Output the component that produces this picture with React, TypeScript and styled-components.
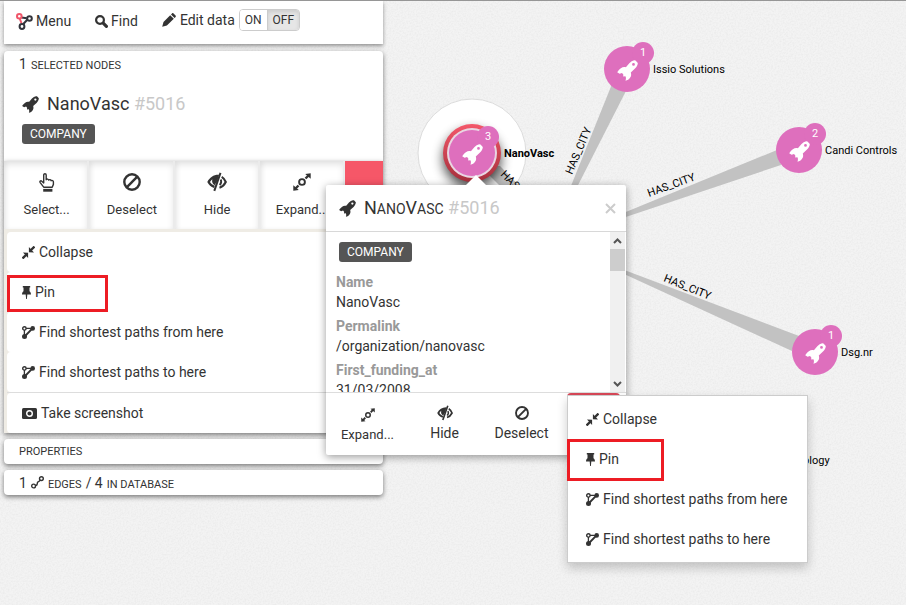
import React, { useState } from "react";
import styled, { createGlobalStyle, css } from "styled-components";

const GlobalStyle = createGlobalStyle`
  * { box-sizing: border-box; }
  body {
    margin: 0;
    background: #f0f0f0;
    color: #333;
    font: 14px/20px Roboto, sans-serif;
  }
  button {
    font: inherit;
    color: inherit;
    border: 0;
    padding: 0;
    margin: 0;
    background: none;
    cursor: pointer;
    text-align: left;
  }
  ul, dl, dd { margin: 0; padding: 0; list-style: none; }
  h2 { margin: 0; font-weight: 400; }
  svg { display: block; flex: none; }
`;

/* ---------- icons ---------- */

type IconProps = { size?: number };

const rocketPath =
  "M17.200.2C15.500.600 13.800 1.600 12.300 3.200L8.900 7.200C7.200 6.700 5.400 7 3.900 8.200C2.600 9.300 1.100 10.600.2 12.300L2.600 13.800L5 13L6.300 14.500L6.200 16.600L8.400 16.300C9.200 17.800 9 19.200 8.500 20.800C10.400 20.500 12.100 19.300 13.200 17.600C14.300 16 14.400 14.300 13.800 12.400L18 8.600C19.800 6.700 20.900 4.600 20.800 2.900L18.500.4zM16.500 3a1.400 1.400 0 1 1 0 2.800 1.400 1.400 0 0 1 0-2.800z";

const RocketIcon = ({ size = 17 }: IconProps) => (
  <svg width={size} height={size} viewBox="0 0 21 21" aria-hidden="true">
    <path d={rocketPath} fill="currentColor" fillRule="evenodd" />
  </svg>
);

const LogoIcon = () => (
  <svg width="17" height="17" viewBox="0 0 17 17" fill="none" strokeWidth="2" aria-hidden="true">
    <path d="M3.700 5.500L5.600 10.500" stroke="#f0566a" />
    <path d="M11.500 6.500L7.300 11M5.500 4.600l5.300.6" stroke="#33343c" />
    <circle cx="3.300" cy="3.300" r="2.300" stroke="#f0566a" />
    <circle cx="13.500" cy="5.500" r="2.300" stroke="#33343c" />
    <circle cx="6" cy="13.500" r="2.400" stroke="#33343c" />
  </svg>
);

const SearchIcon = () => (
  <svg width="13" height="13" viewBox="0 0 13 13" fill="none" stroke="currentColor" aria-hidden="true">
    <circle cx="5" cy="5" r="3.900" strokeWidth="2.200" />
    <path d="M8.200 8.200l3.200 3.200" strokeWidth="3.200" strokeLinecap="round" />
  </svg>
);

const PencilIcon = () => (
  <svg width="14" height="14" viewBox="0 0 14 14" fill="currentColor" aria-hidden="true">
    <path d="M.2 13.800l1.300-4.800L8.200 2.200l3.600 3.600-6.900 6.700zM9 1.400l1-1c.5-.4 1-.4 1.500 0l2.100 2.100c.4.500.4 1 0 1.500l-1 1z" />
  </svg>
);

const HandIcon = () => (
  <svg width="16" height="19" viewBox="0 0 16 19" fill="none" stroke="currentColor" strokeWidth="1.400" strokeLinejoin="round" aria-hidden="true">
    <path d="M4.700 14.200L1.200 9.600C.4 8.400 1.700 7.300 2.800 8.200l1.900 1.700V2c0-1.700 2.500-1.700 2.500 0v4.700c.5-1 2.200-.8 2.500.4.600-.8 2.200-.5 2.400.6.8-.6 2.300-.2 2.300 1.100v2.600l-1.200 2.800z" />
    <path d="M4.200 17.300h9.200" strokeWidth="2.800" strokeLinejoin="miter" />
  </svg>
);

const BanIcon = ({ size = 18 }: IconProps) => (
  <svg width={size} height={size} viewBox="0 0 18 18" fill="none" stroke="currentColor" strokeWidth="2.400" aria-hidden="true">
    <circle cx="9" cy="9" r="7.700" />
    <path d="M3.700 14.300L14.300 3.700" />
  </svg>
);

const HideIcon = ({ size = 20 }: IconProps) => (
  <svg width={size} height={size} viewBox="0 0 20 20" fill="none" stroke="currentColor" aria-hidden="true">
    <path d="M13.500.8L7.300 18.800" strokeWidth="2" />
    <path d="M12.200 2.800C6.800 2.500 2.800 5.200.3 10c1.500 3 3.700 5 6.700 6l.8-2.300C5.600 13 4.100 11.700 3 10c.7-1.200 1.400-2.100 2.300-2.800-.6 2.600.1 5 2.700 6z" fill="currentColor" stroke="none" />
    <path d="M7.600 6.300l3.600-.6-1.700 5c-1.700-.2-2.600-2.200-1.900-4.400z" fill="currentColor" stroke="none" />
    <path d="M14.700 4.800c1.800 1 3.100 2.900 4.100 5.200-1.500 3-3.500 4.800-6.300 5.700" strokeWidth="2.100" />
    <path d="M13.700 7.500c1 2 .6 4-1 5.700" strokeWidth="1.800" />
  </svg>
);

const ExpandIcon = ({ size = 18 }: IconProps) => (
  <svg width={size} height={size} viewBox="0 0 18 18" fill="none" stroke="currentColor" strokeWidth="1.900" aria-hidden="true">
    <circle cx="9" cy="9" r="2.900" />
    <path d="M12.500 5.500l3-3M5.500 12.500l-3 3" strokeWidth="2.400" />
    <path d="M17.700.3v5.500L12.200.900zM.3 17.700v-5.500l5.500 4.900z" fill="currentColor" stroke="none" />
  </svg>
);

const CollapseIcon = () => (
  <svg width="13" height="13" viewBox="0 0 13 13" fill="none" stroke="currentColor" strokeWidth="2.400" aria-hidden="true">
    <path d="M12.500.6L8.500 4.500M.5 12.500l4-4" />
    <path d="M6.900 1v5.200l5.100.2zM6.100 12v-5.200L1 6.600z" fill="currentColor" stroke="none" />
  </svg>
);

const PinIcon = () => (
  <svg width="9" height="13" viewBox="0 0 9 13" fill="currentColor" aria-hidden="true">
    <path d="M.8 0h7.400v1.600H7.500v3.700C8.400 6 9 6.900 9 8.500H5.300L4.900 13h-.8l-.4-4.500H0C0 6.900.6 6 1.500 5.300V1.600H.8z" />
  </svg>
);

const PathIcon = () => (
  <svg width="13" height="13" viewBox="0 0 13 13" fill="none" stroke="currentColor" aria-hidden="true">
    <circle cx="2.400" cy="2.400" r="1.700" strokeWidth="1.400" />
    <path d="M2.400 4v6M4 2.400h6" strokeWidth="1.300" />
    <path d="M2.600 10.500L10.500 2.400" strokeWidth="1.900" />
    <circle cx="10.700" cy="2.400" r="2.300" fill="currentColor" stroke="none" />
    <circle cx="2.500" cy="10.500" r="2.500" fill="currentColor" stroke="none" />
  </svg>
);

const CameraIcon = () => (
  <svg width="15" height="11" viewBox="0 0 15 11" aria-hidden="true">
    <rect width="15" height="11" rx="1.500" fill="currentColor" />
    <circle cx="7.500" cy="5.500" r="2.800" fill="none" stroke="#fff" strokeWidth="1.400" />
  </svg>
);

const EdgeIcon = () => (
  <svg width="13" height="13" viewBox="0 0 13 13" fill="none" stroke="currentColor" strokeWidth="1.400" aria-hidden="true">
    <circle cx="2.600" cy="10" r="1.900" />
    <circle cx="10.400" cy="2.600" r="1.900" />
    <path d="M4.300 9.600c2.700-.3 1.600-1.500 2.200-3C6.900 5.300 8 6 9.200 4.200" />
  </svg>
);

/* ---------- page ---------- */

const Page = styled.main`
  position: relative;
  min-height: 100vh;
  overflow: hidden;
  border-top: 1px solid #969696;
`;

const Canvas = styled.svg`
  position: absolute;
  inset: 0;
  width: 100%;
  height: 100%;
  font: 11px Roboto, sans-serif;
`;

const Sidebar = styled.aside`
  position: relative;
  width: 42%;
  max-width: 379px;
  min-width: 320px;
  margin-left: 4px;
`;

const Card = styled.section`
  margin-bottom: 6px;
  background: #fff;
  border-radius: 4px;
  box-shadow: 0 2px 5px rgba(0, 0, 0, 0.5);
`;

const TopBar = styled.header`
  display: flex;
  align-items: flex-start;
  height: 43px;
  padding: 8px 12px;
  margin-bottom: 7px;
  background: #fff;
  box-shadow: 0 2px 4px rgba(0, 0, 0, 0.4);
`;

const BarButton = styled.button`
  display: flex;
  align-items: center;
  gap: 3px;
  height: 24px;
  margin-right: 24px;
`;

const EditData = styled.div`
  display: flex;
  align-items: center;
  gap: 4px;
  height: 22px;
  line-height: 24px;
`;

const Toggle = styled.div`
  display: flex;
  overflow: hidden;
  border: 1px solid #ccc;
  border-radius: 4px;
`;

const ToggleButton = styled.button<{ $on: boolean }>`
  height: 20px;
  padding: 0 5px;
  font-size: 12px;
  line-height: 20px;
  background: ${(p) => (p.$on ? "#e6e6e6" : "#fff")};
  ${(p) => p.$on && css`box-shadow: inset 0 2px 4px rgba(0, 0, 0, 0.12);`}
  & + & { border-left: 1px solid #ccc; }
`;

const SectionTitle = styled.h2`
  display: flex;
  align-items: baseline;
  gap: 4px;
  padding: 0 15px;
  height: 25px;
  font-size: 14px;
  line-height: 26px;
  svg { align-self: center; }
`;

const Small = styled.span`
  font-size: 11px;
  text-transform: uppercase;
`;

const NodeTitle = styled.h2`
  display: flex;
  align-items: center;
  gap: 8px;
  font-size: 18px;
  line-height: 24px;
`;

const NodeName = styled.span`
  white-space: pre;
`;

const Caps = styled.span`
  font-size: 14px;
  text-transform: uppercase;
`;

const NodeId = styled.span`
  color: #c8c8c8;
`;

const Tag = styled.span`
  display: inline-block;
  height: 20px;
  padding: 0 8px;
  border-radius: 3px;
  background: #555;
  color: #fff;
  font-size: 12px;
  line-height: 20px;
`;

const SelectedCard = styled(Card)`
  height: 110px;
  margin: 0;
  border-radius: 4px 4px 0 0;
`;

const SelectedBody = styled.div`
  display: flex;
  flex-direction: column;
  align-items: flex-start;
  gap: 8px;
  padding: 16px 18px;
`;

const ActionsCard = styled(Card)`
  overflow: hidden;
  border-radius: 0;
  background: #efece5;
`;

const Actions = styled.div`
  display: grid;
  grid-template-columns: repeat(4, 1fr) 38px;
  height: 68px;
`;

const Action = styled.button`
  display: grid;
  grid-template-rows: 42px 14px;
  justify-items: center;
  align-items: center;
  align-content: start;
  padding-left: 2px;
  font-size: 13px;
  background: #fff;
  border-right: 2px solid #ebebeb;
  box-shadow: inset 0 4px 6px rgba(0, 0, 0, 0.1), inset 3px 0 4px rgba(0, 0, 0, 0.04);
`;

const More = styled.button`
  background: #f65768;
`;

const MenuList = styled.ul`
  padding: 3px 0 0 3px;
`;

const MenuItem = styled.li<{ $ruled?: boolean }>`
  position: relative;
  ${(p) => p.$ruled && css`border-top: 1px solid #ddd;`}
`;

const MenuButton = styled.button`
  display: flex;
  align-items: center;
  gap: 4px;
  width: 100%;
  height: 40px;
  padding: 0 15px;
  background: #fff;
  border-radius: 4px;
  white-space: nowrap;
`;

const Highlight = styled.span<{ $wide?: boolean }>`
  position: absolute;
  z-index: 1;
  top: ${(p) => (p.$wide ? 0 : 3)}px;
  bottom: ${(p) => (p.$wide ? -2 : 0)}px;
  left: 0;
  width: ${(p) => (p.$wide ? 97 : 101)}px;
  border: 3px solid #ed1c24;
  pointer-events: none;
`;

/* ---------- popup ---------- */

const Popup = styled.section`
  position: absolute;
  top: 184px;
  left: 326px;
  width: 300px;
  background: #fff;
  border-radius: 2px;
  box-shadow: 0 2px 8px rgba(0, 0, 0, 0.4);
  &::before {
    content: "";
    position: absolute;
    bottom: 100%;
    left: 140px;
    border: 10px solid transparent;
    border-top-width: 0;
    border-bottom-color: #fff;
  }
`;

const PopupHeader = styled.header`
  display: flex;
  align-items: center;
  justify-content: space-between;
  height: 47px;
  padding: 1px 10px 0 13px;
  border-bottom: 1px solid #d8d8d8;
`;

const Close = styled.button`
  color: #ccc;
`;

const PopupBody = styled.div`
  display: flex;
  height: 161px;
  border-bottom: 1px solid #ddd;
`;

const Content = styled.div`
  flex: 1;
  overflow: hidden;
  padding: 9px 13px 0;
`;

const Fields = styled.dl`
  margin: 10px -3px 0;
  dt { color: #999; font-weight: 700; line-height: 20px; }
  dd { margin-bottom: 4px; line-height: 20px; }
`;

const ScrollBar = styled.div`
  display: flex;
  flex-direction: column;
  align-items: center;
  width: 15px;
  margin-right: 1px;
  background: #f0f0f0;
`;

const Thumb = styled.div`
  width: 100%;
  height: 22px;
  margin-bottom: auto;
  background: #cdcdcd;
`;

const PopupFooter = styled.footer`
  display: grid;
  grid-template-columns: repeat(3, 77px) 1fr;
  height: 62px;
  padding: 0 6px 0 3px;
`;

const PopupAction = styled.button<{ $compact?: boolean }>`
  display: grid;
  grid-template-rows: 20px 20px;
  justify-items: center;
  align-items: center;
  align-content: start;
  padding-top: ${(p) => (p.$compact ? 12 : 10)}px;
  font-size: ${(p) => (p.$compact ? 13 : 14)}px;
`;

const MoreWrap = styled.div`
  position: relative;
  margin-left: 7px;
  button[aria-expanded] {
    display: block;
    width: 100%;
    height: 40px;
    border-radius: 4px 4px 0 0;
    background: #d94858;
  }
`;

const Dropdown = styled.ul`
  position: absolute;
  top: 2px;
  left: 0;
  width: 241px;
  padding: 3px 0;
  background: #fff;
  border: 1px solid #ccc;
  box-shadow: 0 5px 10px rgba(0, 0, 0, 0.2);
  ${MenuButton} { padding: 0 18px; }
  ${Highlight} { left: -1px; }
`;

/* ---------- graph ---------- */

type GraphNode = { x: number; y: number; links: number; label: string };

const nodes: GraphNode[] = [
  { x: 627, y: 68, links: 1, label: "Issio Solutions" },
  { x: 799, y: 149, links: 2, label: "Candi Controls" },
  { x: 815, y: 351, links: 1, label: "Dsg.nr" },
];

const Disc = ({ x, y, links }: { x: number; y: number; links: number }) => (
  <g transform={`translate(${x} ${y})`}>
    <circle r="23" fill="#de6fbd" />
    <circle cx="16" cy="-16" r="11" fill="#de6fbd" />
    <g transform="translate(-10 -9)">
      <path d={rocketPath} fill="#fff" fillRule="evenodd" />
    </g>
    <text x="16" y="-13" fill="#fff" textAnchor="middle">{links}</text>
  </g>
);

const Graph = () => (
  <Canvas role="img" aria-label="Graph of companies linked by city">
    <defs>
      <filter id="grain" x="0" y="0" width="100%" height="100%">
        <feTurbulence type="fractalNoise" baseFrequency="0.6" numOctaves="2" />
        <feColorMatrix values="0 0 0 0 0.4  0 0 0 0 0.4  0 0 0 0 0.4  0.22 0 0 0 -0.08" />
      </filter>
      <filter id="glow" x="-60%" y="-60%" width="220%" height="220%">
        <feGaussianBlur stdDeviation="6" />
      </filter>
      <linearGradient id="ring" x1="0" y1="0" x2="0" y2="1">
        <stop offset="0" stopColor="#f4586a" />
        <stop offset="1" stopColor="#a62f3c" />
      </linearGradient>
    </defs>
    <rect width="100%" height="100%" fill="#f3f3f3" />
    <rect width="100%" height="100%" filter="url(#grain)" />
    <circle cx="472" cy="152" r="54" fill="#fff" stroke="#dcdcdc" />
    <g fill="#c2c2c2">
      <path d="M546 247L612 83 626 90z" />
      <path d="M560 238L777 149 781 164z" />
      <path d="M574 250L799 335 792 350z" />
      <path d="M480 165L500 165 546 212 540 225z" />
    </g>
    <circle cx="472" cy="158" r="29" fill="#000" opacity="0.7" filter="url(#glow)" />
    <circle cx="472" cy="152" r="29" fill="url(#ring)" />
    <circle cx="472" cy="152" r="25" fill="#e9d6e2" />
    <Disc x={472} y={152} links={3} />
    <text x="504" y="156" fontWeight="700">NanoVasc</text>
    {nodes.map((n) => (
      <g key={n.label}>
        <Disc x={n.x} y={n.y} links={n.links} />
        <text x={n.x + 26} y={n.y + 4}>{n.label}</text>
      </g>
    ))}
    <text x="803" y="463">ology</text>
    <text transform="translate(572 174) rotate(-67)">HAS_CITY</text>
    <text transform="translate(649 196) rotate(-20)">HAS_CITY</text>
    <text transform="translate(663 280) rotate(22)">HAS_CITY</text>
    <text transform="translate(500 174) rotate(45)">HAS_CITY</text>
  </Canvas>
);

/* ---------- parts ---------- */

const commands = [
  { label: "Collapse", Icon: CollapseIcon },
  { label: "Pin", Icon: PinIcon },
  { label: "Find shortest paths from here", Icon: PathIcon },
  { label: "Find shortest paths to here", Icon: PathIcon },
];

const Commands = ({ wide }: { wide?: boolean }) => (
  <>
    {commands.map(({ label, Icon }) => (
      <MenuItem key={label}>
        <MenuButton><Icon />{label}</MenuButton>
        {label === "Pin" && <Highlight $wide={wide} />}
      </MenuItem>
    ))}
  </>
);

const Chevron = ({ down }: { down?: boolean }) => (
  <svg width="15" height="17" viewBox="0 0 15 17" fill="none" stroke="#555" strokeWidth="2" aria-hidden="true">
    <path d={down ? "M4 7l3.500 3.500L11 7" : "M4 11l3.500-3.500L11 11"} />
  </svg>
);

export default function App() {
  const [editing, setEditing] = useState(false);

  return (
    <>
      <GlobalStyle />
      <Page>
        <Graph />
        <Sidebar>
          <TopBar>
            <BarButton><LogoIcon />Menu</BarButton>
            <BarButton><SearchIcon />Find</BarButton>
            <EditData>
              <PencilIcon />
              <span id="edit-data">Edit data</span>
              <Toggle role="group" aria-labelledby="edit-data">
                <ToggleButton $on={editing} aria-pressed={editing} onClick={() => setEditing(true)}>ON</ToggleButton>
                <ToggleButton $on={!editing} aria-pressed={!editing} onClick={() => setEditing(false)}>OFF</ToggleButton>
              </Toggle>
            </EditData>
          </TopBar>

          <SelectedCard>
            <SectionTitle>1 <Small>selected nodes</Small></SectionTitle>
            <SelectedBody>
              <NodeTitle>
                <RocketIcon />
                <NodeName>NanoVasc <NodeId>#5016</NodeId></NodeName>
              </NodeTitle>
              <Tag>COMPANY</Tag>
            </SelectedBody>
          </SelectedCard>

          <ActionsCard>
            <Actions>
              <Action><HandIcon />Select...</Action>
              <Action><BanIcon />Deselect</Action>
              <Action><HideIcon />Hide</Action>
              <Action><ExpandIcon />Expand...</Action>
              <More aria-label="More actions" />
            </Actions>
            <MenuList>
              <Commands />
              <MenuItem $ruled>
                <MenuButton><CameraIcon />Take screenshot</MenuButton>
              </MenuItem>
            </MenuList>
          </ActionsCard>

          <Card>
            <SectionTitle><Small>Properties</Small></SectionTitle>
          </Card>
          <Card>
            <SectionTitle>
              1 <EdgeIcon /> <Small>edges</Small> / 4 <Small>in database</Small>
            </SectionTitle>
          </Card>
        </Sidebar>

        <Popup aria-label="NanoVasc">
          <PopupHeader>
            <NodeTitle>
              <RocketIcon />
              <NodeName>N<Caps>ano</Caps>V<Caps>asc</Caps> <NodeId>#5016</NodeId></NodeName>
            </NodeTitle>
            <Close aria-label="Close">
              <svg width="11" height="11" viewBox="0 0 11 11" stroke="currentColor" strokeWidth="2">
                <path d="M1 1l9 9M10 1l-9 9" />
              </svg>
            </Close>
          </PopupHeader>
          <PopupBody>
            <Content>
              <Tag>COMPANY</Tag>
              <Fields>
                <dt>Name</dt><dd>NanoVasc</dd>
                <dt>Permalink</dt><dd>/organization/nanovasc</dd>
                <dt>First_funding_at</dt><dd>31/03/2008</dd>
              </Fields>
            </Content>
            <ScrollBar aria-hidden="true">
              <Chevron />
              <Thumb />
              <Chevron down />
            </ScrollBar>
          </PopupBody>
          <PopupFooter>
            <PopupAction $compact><ExpandIcon size={14} />Expand...</PopupAction>
            <PopupAction><HideIcon size={16} />Hide</PopupAction>
            <PopupAction><BanIcon size={14} />Deselect</PopupAction>
            <MoreWrap>
              <button aria-label="More actions" aria-expanded="true" />
              <Dropdown>
                <Commands wide />
              </Dropdown>
            </MoreWrap>
          </PopupFooter>
        </Popup>
      </Page>
    </>
  );
}
